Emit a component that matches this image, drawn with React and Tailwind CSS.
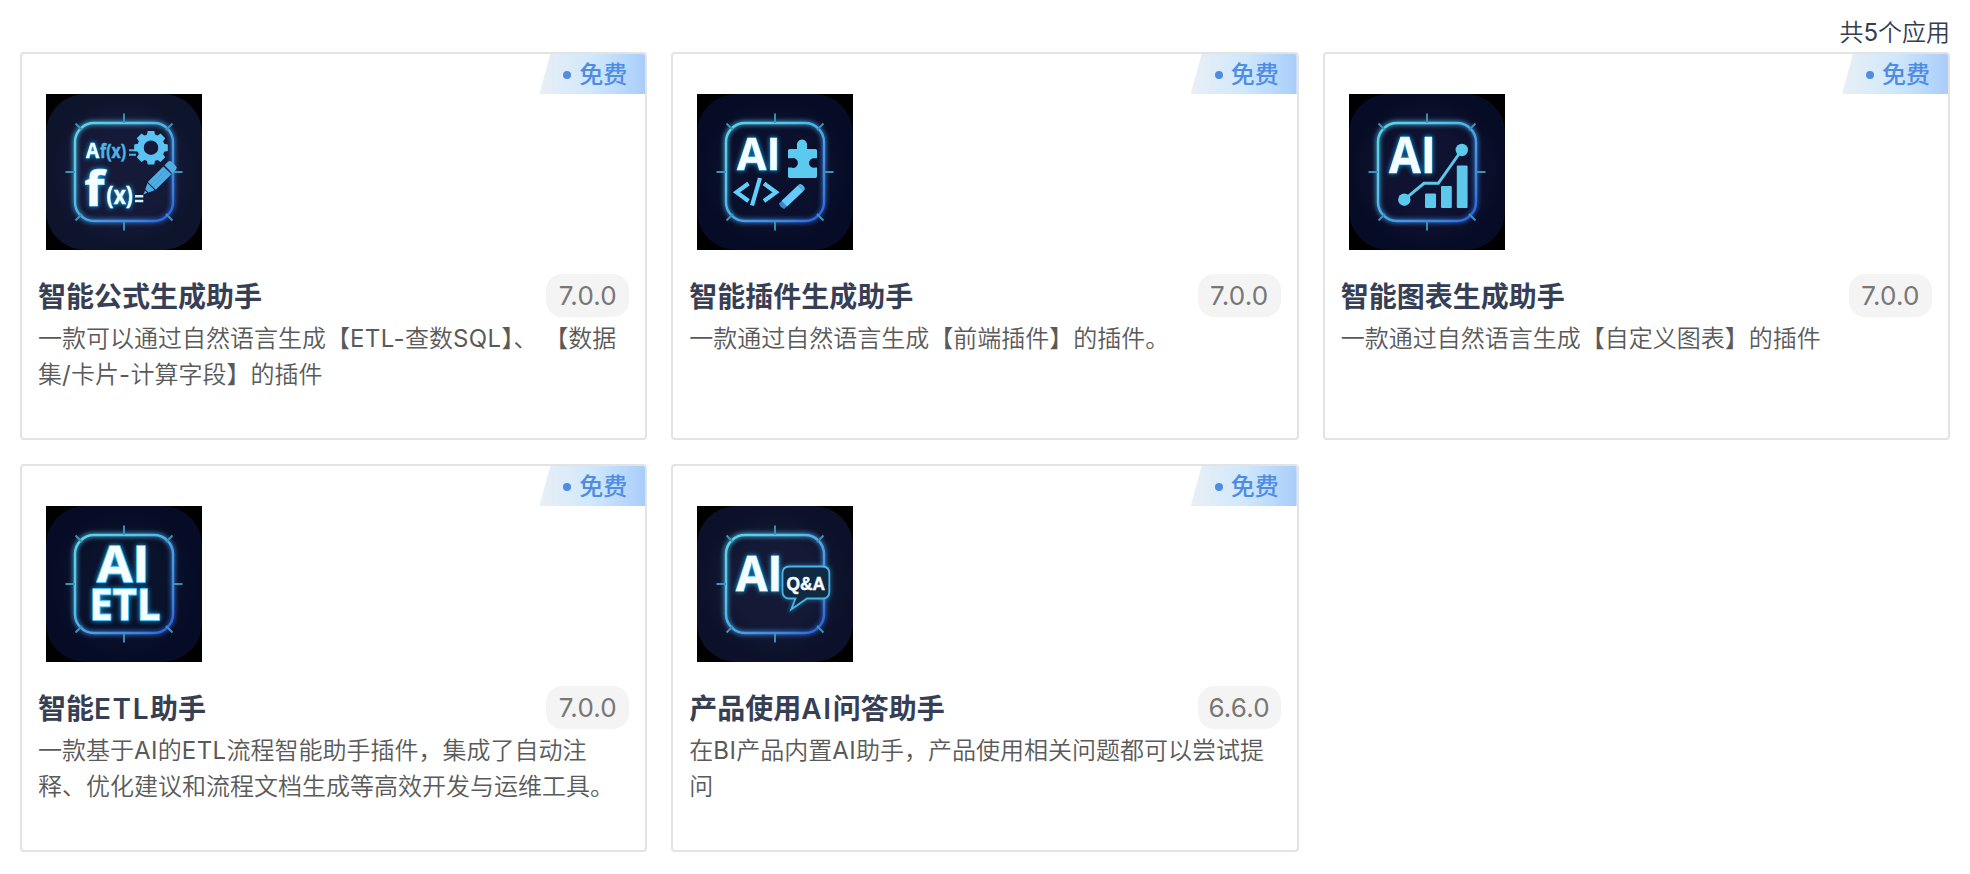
import React from "react";

const GLYPH = "'Open Sans', 'Noto Sans', sans-serif";

/* Text stretched to an exact width inside an icon. */
function Word({ w, size, fill = "#f5fdff", family = GLYPH, weight = 700, children, ...rest }) {
  return (
    <text
      fontSize={size}
      textLength={w}
      lengthAdjust="spacingAndGlyphs"
      fontWeight={weight}
      fontFamily={family}
      fill={fill}
      {...rest}
    >
      {children}
    </text>
  );
}

/* Word with a cyan outline and a soft halo. */
function GlowWord({ halo = 1.6, edge = "#4cc4f5", children, ...p }) {
  return (
    <g className="[filter:drop-shadow(0_0_2.5px_#1f9ad6)]">
      <Word {...p} stroke={edge} strokeWidth={halo} strokeLinejoin="round" paintOrder="stroke">{children}</Word>
    </g>
  );
}

function Frame({ id, base, core, rightTick = true, children }) {
  return (
    <svg viewBox="0 0 156 156" className="block size-[156px] bg-black">
      <defs>
        <linearGradient id={`${id}-edge`} x1="0" y1="0" x2="1" y2="1">
          <stop offset="0" stopColor="#5ad6ee" />
          <stop offset="0.35" stopColor="#52c2ee" />
          <stop offset="0.6" stopColor="#479ceb" />
          <stop offset="0.85" stopColor="#3a7fe0" />
          <stop offset="1" stopColor="#2459dc" />
        </linearGradient>
        <radialGradient id={`${id}-bg`}>
          <stop offset="0" stopColor={core} />
          <stop offset="0.55" stopColor={core} />
          <stop offset="1" stopColor={base} />
        </radialGradient>
        <filter id={`${id}-blur`} x="-30%" y="-30%" width="160%" height="160%">
          <feGaussianBlur stdDeviation="2.2" />
        </filter>
      </defs>
      <rect width="156" height="156" rx="39" fill={base} />
      <circle cx="78" cy="78" r="76" fill={`url(#${id}-bg)`} />
      <rect x="29" y="29" width="98" height="98" rx="19" fill="none" stroke={`url(#${id}-edge)`} strokeWidth="5" opacity="0.6" filter={`url(#${id}-blur)`} />
      <rect x="29" y="29" width="98" height="98" rx="19" fill="none" stroke={`url(#${id}-edge)`} strokeWidth="2.4" />
      <g stroke="#3f93b8" strokeWidth="1.9" fill="none">
        <path d="M78 19.5V29M78 127V136.500M19.500 78H29" />
        {rightTick && <path d="M127 78H136.500" />}
        <path d="M29.500 29.500L36 36M126.500 29.500L120 36M29.500 126.500L36 120M126.500 126.500L120 120" />
      </g>
      {children}
    </svg>
  );
}

function FormulaIcon() {
  return (
    <Frame id="formula" base="#0d142c" core="#161a39">
      <GlowWord x="40" y="64" w="13.3" size="20.5" halo={0.8}>A</GlowWord>
      <Word x="54" y="64" w="26" size="19" fill="#4db4e6" stroke="#4db4e6" strokeWidth="0.5">f(x)</Word>
      <path d="M83 56.200H90M83 60.800H90" stroke="#4db4e6" strokeWidth="1.900" />
      <g transform="translate(105 53.700)" fill="#5bc3f3">
        <circle r="10.500" fill="none" stroke="#5bc3f3" strokeWidth="6.500" />
        {[0, 45, 90, 135, 180, 225, 270, 315].map((a) => (
          <path key={a} transform={`rotate(${a})`} d="M-4.200 -12L-3.300 -16.800H3.300L4.200 -12Z" />
        ))}
      </g>
      <GlowWord x="38.500" y="111.500" w="20" size="48" halo={1.2}>f</GlowWord>
      <GlowWord x="60.500" y="109.500" w="26.500" size="25" halo={1}>(x)</GlowWord>
      <path d="M89 102.300H97.300M89 107.100H97.300" stroke="#c9f4ff" strokeWidth="2.500" />
      <g transform="translate(97.300 100.400) rotate(-45)" fill="#4fafe4">
        <path d="M0 0L4 -1.600V1.600Z" />
        <path d="M5 -2.200L11 -5V5L5 2.200Z" />
        <path d="M12 -5.600H34V5.600H12Z" />
        <path d="M12 -1.500H34M12 1.900H34" stroke="#3b93cb" strokeWidth="0.800" />
        <path d="M35.500 -5.600H40.500Q43 -5.600 43 -3V3Q43 5.600 40.500 5.600H35.500Z" />
      </g>
    </Frame>
  );
}

function PluginIcon() {
  return (
    <Frame id="plugin" base="#070c26" core="#0b102c">
      <GlowWord x="40" y="76" w="43.500" size="45.500" halo={0.9}>AI</GlowWord>
      <g fill="none" stroke="#5fd0fa" strokeWidth="4.200">
        <path d="M51.500 89.500L39.500 98.300L51.500 107" />
        <path d="M67 89.500L79 98.300L67 107" />
        <path d="M63 84L55 111.500" />
      </g>
      <path
        fill="#5cc9f0"
        d="M92.500 55H100V52.500A5.200 5.500 0 1 1 110 52.500V55H118.500Q120 55 120 56.500V64.300H118A4.800 4.800 0 1 0 118 73.600H120V82.300Q120 84 118.500 84H92.500Q91 84 91 82.300V73.600H94.500A4.900 4.900 0 1 0 94.500 64.300H91V56.500Q91 55 92.500 55Z"
      />
      <g transform="translate(83.800 113) rotate(-43.500)">
        <path d="M0 0L1 -3.800H8V3.800H1Z" fill="#3e86cc" />
        <path d="M5 -4H27.500V4H5Z" fill="#66cbfb" />
        <path d="M27.500 -4H28.500Q31 -3.500 31 0Q31 3.500 28.500 4H27.500Z" fill="#55b4ee" />
      </g>
    </Frame>
  );
}

function ChartIcon() {
  return (
    <Frame id="chart" base="#070c26" core="#0f1230">
      <GlowWord x="40" y="79" w="47" size="49.500" halo={0.9}>AI</GlowWord>
      <g fill="#5cc8ec">
        <circle cx="55.300" cy="105.700" r="6.200" />
        <circle cx="112.800" cy="56" r="6.200" />
        <rect x="76" y="99.500" width="11" height="14.500" rx="1" />
        <rect x="92" y="92" width="10.800" height="22" rx="1" />
        <rect x="107.800" y="71.500" width="10.800" height="42.500" rx="1" />
      </g>
      <path d="M55.300 105.700L75 89.300H89.300L112.800 56" fill="none" stroke="#5cc8ec" strokeWidth="3" />
    </Frame>
  );
}

function EtlIcon() {
  return (
    <Frame id="etl" base="#070c26" core="#0a122c">
      <GlowWord x="51" y="76" w="52.500" size="49.500" halo={2}>AI</GlowWord>
      <GlowWord x="43.500" y="114" w="71" size="43" halo={2}>ETL</GlowWord>
    </Frame>
  );
}

function QaIcon() {
  const bubble =
    "M92.500 60.500H125.500Q132.300 60.500 132.300 67.500V85.500Q132.300 92.500 125.500 92.500H110L94.300 103.300L98.500 92.500H92.500Q85.500 92.500 85.500 85.500V67.500Q85.500 60.500 92.500 60.500Z";
  return (
    <Frame id="qa" base="#0c1129" core="#141936" rightTick={false}>
      <GlowWord x="39" y="85" w="46.500" size="49" halo={1.5}>AI</GlowWord>
      <path d={bubble} fill="none" stroke="#2aa5d8" strokeWidth="3" opacity="0.6" filter="url(#qa-blur)" />
      <path d={bubble} fill="#0f2a42" stroke="#4cb4e2" strokeWidth="1.800" />
      <Word x="89.500" y="83.500" w="38.500" size="18.500" family="'Liberation Sans', sans-serif" stroke="#f5fdff" strokeWidth="0.500">Q&amp;A</Word>
    </Frame>
  );
}

const apps = [
  {
    icon: FormulaIcon,
    name: "智能公式生成助手",
    version: "7.0.0",
    lines: ["一款可以通过自然语言生成【ETL-查数SQL】、 【数据", "集/卡片-计算字段】的插件"],
  },
  { icon: PluginIcon, name: "智能插件生成助手", version: "7.0.0", lines: ["一款通过自然语言生成【前端插件】的插件。"] },
  { icon: ChartIcon, name: "智能图表生成助手", version: "7.0.0", lines: ["一款通过自然语言生成【自定义图表】的插件"] },
  {
    icon: EtlIcon,
    name: "智能ETL助手",
    version: "7.0.0",
    lines: ["一款基于AI的ETL流程智能助手插件，集成了自动注", "释、优化建议和流程文档生成等高效开发与运维工具。"],
  },
  {
    icon: QaIcon,
    name: "产品使用AI问答助手",
    version: "6.6.0",
    lines: ["在BI产品内置AI助手，产品使用相关问题都可以尝试提", "问"],
  },
];

/* Gives Latin runs inside Chinese text their own weight and tracking. */
function Mixed({ text, latin }) {
  return text
    .split(/([A-Za-z0-9/-]+)/)
    .map((part, i) => (i % 2 ? <span key={i} className={latin}>{part}</span> : part));
}

function FreeBadge() {
  return (
    <div className="absolute top-0 right-0 flex h-10 w-[106px] items-center gap-2 bg-linear-to-r from-[#e9eff5] via-[#d0e8fc] to-[#a9cdfa] pt-px pl-6 text-2xl leading-10 text-[#4f8ce2] [clip-path:polygon(11px_0,100%_0,100%_100%,0_100%)]">
      <span className="size-2 shrink-0 rounded-full bg-[#4f8ce2]" />
      <span className="font-medium whitespace-nowrap">免费</span>
    </div>
  );
}

function AppCard({ icon: Icon, name, version, lines }) {
  return (
    <article className="relative h-[388px] overflow-hidden rounded-[4px] border-2 border-[#e3e3e3] bg-white px-4 pt-10">
      <FreeBadge />
      <div className="pl-2">
        <Icon />
      </div>
      <div className="mt-6 flex h-[43px] items-center justify-between">
        <h2 className="pt-[3px] text-[28px] leading-[43px] font-bold whitespace-nowrap text-[#373f55]">
          <Mixed text={name} latin="font-semibold tracking-[1.6px]" />
        </h2>
        <span className="flex h-[43px] w-[83px] items-center justify-center rounded-2xl bg-[#f4f4f4] text-[26px] font-normal tracking-[0.2px] text-[#777]">
          {version}
        </span>
      </div>
      <p className="mt-1 text-2xl leading-9 font-[350] text-[#5a5a5a]">
        {lines.map((line) => (
          <span key={line} className="block whitespace-nowrap">
            <Mixed text={line} latin="font-normal tracking-[0.4px]" />
          </span>
        ))}
      </p>
    </article>
  );
}

export default function App() {
  return (
    <main className="h-[874px] bg-white px-5 font-['Inter','Noto_Sans_CJK_SC',sans-serif]">
      <div className="flex h-[52px] items-end justify-end pb-px text-2xl leading-9 font-[350] text-[#343c50]">
        <span className="whitespace-nowrap">
          <Mixed text="共5个应用" latin="font-normal" />
        </span>
      </div>
      <div className="grid grid-cols-3 gap-6">
        {apps.map((app) => (
          <AppCard key={app.name} {...app} />
        ))}
      </div>
    </main>
  );
}
